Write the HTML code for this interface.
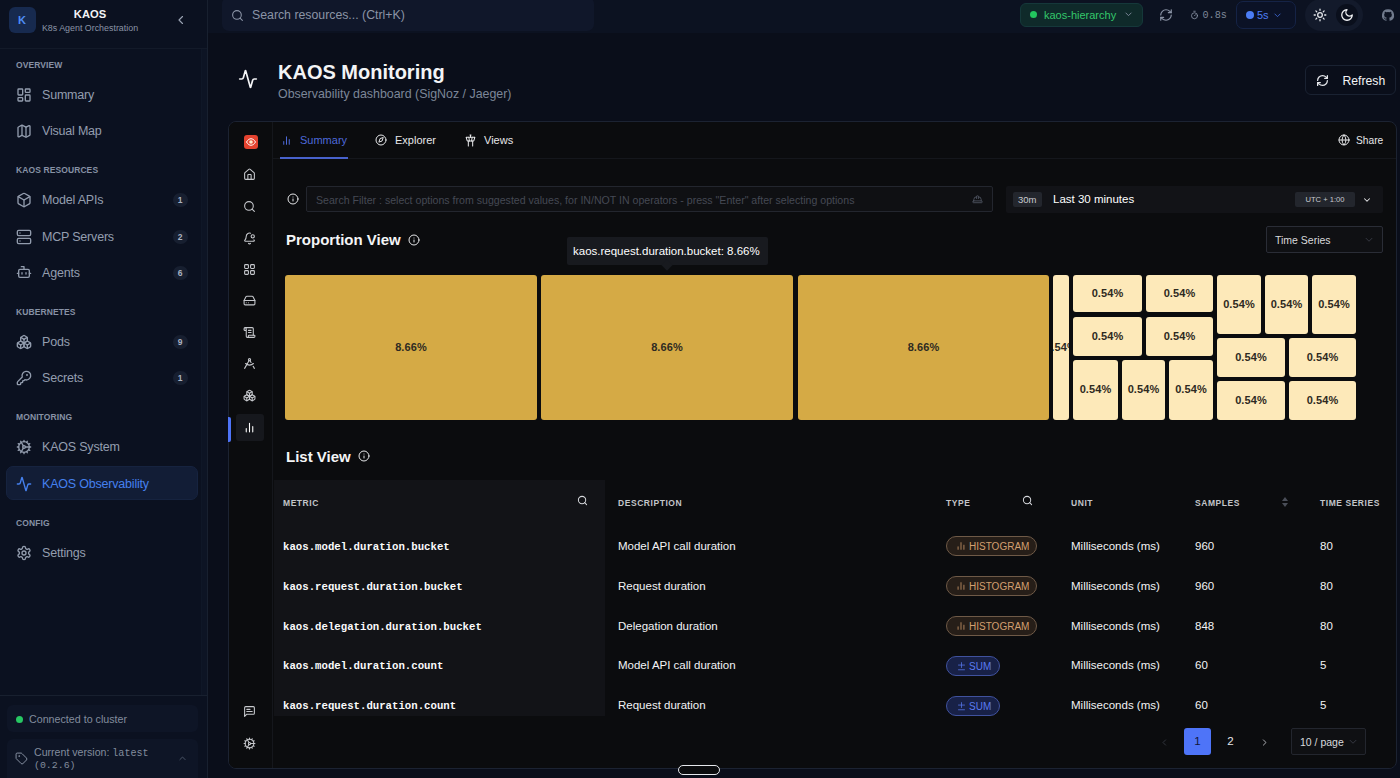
<!DOCTYPE html>
<html lang="en">
<head>
<meta charset="utf-8">
<title>KAOS Monitoring</title>
<style>
*{box-sizing:border-box;margin:0;padding:0}
html,body{width:1400px;height:778px;overflow:hidden;background:#0a0e1a;font-family:"Liberation Sans",sans-serif;color:#e5e7eb}
.abs{position:absolute}
svg{display:block;overflow:visible}
.ic{position:absolute;fill:none;stroke:currentColor;stroke-width:2;stroke-linecap:round;stroke-linejoin:round}
.t{position:absolute;white-space:nowrap;line-height:1}
.mono{font-family:"Liberation Mono",monospace}

/* ---------- sidebar ---------- */
#sb{position:absolute;left:0;top:0;width:208px;height:778px;background:#0b1120;border-right:1px solid #18202f}
#sb .hdrline{position:absolute;left:0;top:48px;width:207px;height:1px;background:#131a29}
#sb .ftline{position:absolute;left:0;top:695px;width:207px;height:1px;background:#18202f}
.sec{position:absolute;left:16px;font-size:8.5px;font-weight:bold;letter-spacing:.1px;color:#8792a5;line-height:1;white-space:nowrap}
.nav{position:absolute;left:42px;margin-top:.5px;font-size:12.5px;color:#949eaf;line-height:1;white-space:nowrap;letter-spacing:-.2px}
.nico{position:absolute;left:16px;width:16px;height:16px;color:#929cad;margin-top:1.5px}
.bdg{position:absolute;left:172.5px;margin-top:.5px;width:15px;height:14px;border-radius:7px;background:#171f30;color:#aab3c2;font-size:8.5px;font-weight:bold;text-align:center;line-height:14px}

/* ---------- topbar ---------- */
#top{position:absolute;left:208px;top:0;width:1192px;height:33px;background:#0c1221}

/* ---------- panel ---------- */
#pn{position:absolute;left:228px;top:121px;width:1169px;height:648px;background:#0b0c0e;border:1px solid #1c2332;border-radius:8px;overflow:hidden}
#pn .rail{position:absolute;left:0;top:0;width:44px;height:100%;border-right:1px solid #15171c;background:#0b0c0e}
.ri{position:absolute;left:14px;width:13px;height:13px;color:#c6c8cc;stroke-width:2}
.tab{position:absolute;top:13px;font-size:11px;color:#e6e7e9;line-height:1;white-space:nowrap}
.tm{position:absolute;padding-bottom:1.5px;border-radius:3px;font-size:11px;font-weight:bold;color:#2e2a22;display:flex;align-items:center;justify-content:center;overflow:hidden;white-space:nowrap;letter-spacing:.1px}
.tm.g{background:#d5aa45}
.tm.l{background:#fde9b9}
.th{position:absolute;top:377px;font-size:8.5px;font-weight:bold;letter-spacing:.55px;color:#c3c5c9;line-height:1;white-space:nowrap}
.td{position:absolute;font-size:11.5px;color:#f2f3f5;line-height:1;white-space:nowrap}
.mn{position:absolute;left:54px;font-family:"Liberation Mono",monospace;font-weight:bold;font-size:10.7px;color:#fbfbfc;line-height:1;white-space:nowrap;letter-spacing:0;margin-top:2px}
.hg{position:absolute;left:717px;width:91px;height:20px;border-radius:10px;border:1px solid #6f5a47;background:#261e18;color:#d39f6f;font-size:10px;line-height:19.5px;white-space:nowrap}
.sm{position:absolute;left:717px;width:54px;height:20px;border-radius:10px;border:1px solid #40529e;background:#182147;color:#5a7bf0;font-size:10px;line-height:19.5px;margin-top:1px;white-space:nowrap}
</style>
</head>
<body>

<!-- ================= SIDEBAR ================= -->
<div id="sb">
  <div class="abs" style="left:9px;top:7px;width:27px;height:26px;border-radius:6px;background:#172a4f"></div>
  <div class="t" style="left:18px;top:15px;font-size:11px;font-weight:bold;color:#4f8df7">K</div>
  <div class="t" style="left:40px;width:100px;text-align:center;top:9px;font-size:11.2px;font-weight:bold;color:#f3f4f6">KAOS</div>
  <div class="t" style="left:40px;width:100px;text-align:center;top:24px;font-size:8.9px;color:#8a94a6">K8s Agent Orchestration</div>
  <svg class="ic" style="left:175px;top:14px;color:#9aa3b3;stroke-width:2.3" width="12" height="12" viewBox="0 0 24 24"><path d="M15 5l-7 7 7 7"/></svg>
  <div class="abs" style="left:201px;top:49px;width:6px;height:646px;background:#0d1424;border-left:1px solid #0f1727"></div>
  <div class="hdrline"></div>

  <div class="sec" style="top:61px">OVERVIEW</div>
  <svg class="ic nico" style="top:85px" viewBox="0 0 24 24"><rect x="3" y="3" width="7" height="9" rx="1"/><rect x="14" y="3" width="7" height="5" rx="1"/><rect x="14" y="12" width="7" height="9" rx="1"/><rect x="3" y="16" width="7" height="5" rx="1"/></svg>
  <div class="nav" style="top:88px">Summary</div>
  <svg class="ic nico" style="top:121px" viewBox="0 0 24 24"><path d="M14.1 5.8a2 2 0 0 0 1.8 0l3.7-1.8A1 1 0 0 1 21 4.9v12.9a1 1 0 0 1-.6.9l-4.500 2.300a2 2 0 0 1-1.800 0l-4.200-2.100a2 2 0 0 0-1.800 0l-3.700 1.800A1 1 0 0 1 3 19.800V6.900a1 1 0 0 1 .6-.9l4.500-2.300a2 2 0 0 1 1.800 0z"/><path d="M15 5.800v15"/><path d="M9 3.200v15"/></svg>
  <div class="nav" style="top:124px">Visual Map</div>

  <div class="sec" style="top:166px">KAOS RESOURCES</div>
  <svg class="ic nico" style="top:190px" viewBox="0 0 24 24"><path d="M21 8a2 2 0 0 0-1-1.700l-7-4a2 2 0 0 0-2 0l-7 4A2 2 0 0 0 3 8v8a2 2 0 0 0 1 1.700l7 4a2 2 0 0 0 2 0l7-4A2 2 0 0 0 21 16z"/><path d="M3.300 7L12 12l8.700-5"/><path d="M12 22V12"/></svg>
  <div class="nav" style="top:193px">Model APIs</div><div class="bdg" style="top:192px">1</div>
  <svg class="ic nico" style="top:227px" viewBox="0 0 24 24"><rect x="2" y="2" width="20" height="8" rx="2"/><rect x="2" y="14" width="20" height="8" rx="2"/><path d="M6 6h.01M6 18h.01"/></svg>
  <div class="nav" style="top:230px">MCP Servers</div><div class="bdg" style="top:229px">2</div>
  <svg class="ic nico" style="top:262px" viewBox="0 0 24 24"><path d="M12 8V4H8"/><rect x="4" y="8" width="16" height="12" rx="2"/><path d="M2 14h2M20 14h2M15 13v2M9 13v2"/></svg>
  <div class="nav" style="top:266px">Agents</div><div class="bdg" style="top:265px">6</div>

  <div class="sec" style="top:308px">KUBERNETES</div>
  <svg class="ic nico" style="top:332px" viewBox="0 0 24 24"><path d="M2.970 12.920A2 2 0 0 0 2 14.630v3.240a2 2 0 0 0 .970 1.710l3 1.800a2 2 0 0 0 2.060 0L12 19v-5.500l-5-3-4.030 2.420Z"/><path d="M7 16.500l-4.740-2.850"/><path d="M7 16.500l5-3"/><path d="M7 16.500v5.170"/><path d="M12 13.500V19l3.970 2.380a2 2 0 0 0 2.060 0l3-1.800a2 2 0 0 0 .970-1.710v-3.240a2 2 0 0 0-.970-1.710L17 10.500l-5 3Z"/><path d="M17 16.500l-5-3"/><path d="M17 16.500l4.740-2.850"/><path d="M17 16.500v5.170"/><path d="M7.970 4.420A2 2 0 0 0 7 6.130v4.370l5 3 5-3V6.130a2 2 0 0 0-.970-1.710l-3-1.800a2 2 0 0 0-2.060 0l-3 1.800Z"/><path d="M12 8L7.260 5.150"/><path d="M12 8l4.740-2.850"/><path d="M12 13.500V8"/></svg>
  <div class="nav" style="top:335px">Pods</div><div class="bdg" style="top:334px">9</div>
  <svg class="ic nico" style="top:368px" viewBox="0 0 24 24"><path d="M2.586 17.414A2 2 0 0 0 2 18.828V21a1 1 0 0 0 1 1h3a1 1 0 0 0 1-1v-1a1 1 0 0 1 1-1h1a1 1 0 0 0 1-1v-1a1 1 0 0 1 1-1h.172a2 2 0 0 0 1.414-.586l.814-.814a6.500 6.500 0 1 0-4-4z"/><circle cx="16.500" cy="7.500" r=".5" fill="currentColor"/></svg>
  <div class="nav" style="top:371px">Secrets</div><div class="bdg" style="top:370px">1</div>

  <div class="sec" style="top:413px">MONITORING</div>
  <svg class="ic nico" style="top:437px" viewBox="0 0 24 24"><circle cx="12" cy="12" r="8"/><path d="M12 2v2M12 22v-2M17 20.660l-1-1.730M11 10.270L7 3.340M20.660 17l-1.730-1M3.340 7l1.730 1M14 12h8M2 12h2M20.660 7l-1.730 1M3.340 17l1.730-1M17 3.340l-1 1.730M11 13.730l-4 6.930"/><circle cx="12" cy="12" r="2"/></svg>
  <div class="nav" style="top:440px">KAOS System</div>
  <div class="abs" style="left:6px;top:466px;width:192px;height:34px;border-radius:7px;background:#121d36;border:1px solid #16233f"></div>
  <svg class="ic nico" style="top:474px;color:#4580ee" viewBox="0 0 24 24"><path d="M22 12h-2.480a2 2 0 0 0-1.930 1.460l-2.350 8.360a.25.25 0 0 1-.480 0L9.240 2.180a.25.25 0 0 0-.480 0l-2.350 8.360A2 2 0 0 1 4.490 12H2"/></svg>
  <div class="nav" style="top:477px;color:#4580ee">KAOS Observability</div>

  <div class="sec" style="top:519px">CONFIG</div>
  <svg class="ic nico" style="top:543px" viewBox="0 0 24 24"><path d="M12.220 2h-.440a2 2 0 0 0-2 2v.180a2 2 0 0 1-1 1.730l-.430.250a2 2 0 0 1-2 0l-.150-.080a2 2 0 0 0-2.730.730l-.220.380a2 2 0 0 0 .730 2.730l.150.100a2 2 0 0 1 1 1.720v.510a2 2 0 0 1-1 1.740l-.150.090a2 2 0 0 0-.730 2.730l.220.380a2 2 0 0 0 2.730.730l.150-.080a2 2 0 0 1 2 0l.430.250a2 2 0 0 1 1 1.730V20a2 2 0 0 0 2 2h.440a2 2 0 0 0 2-2v-.180a2 2 0 0 1 1-1.730l.430-.250a2 2 0 0 1 2 0l.150.080a2 2 0 0 0 2.730-.730l.220-.390a2 2 0 0 0-.730-2.730l-.150-.080a2 2 0 0 1-1-1.740v-.500a2 2 0 0 1 1-1.740l.150-.090a2 2 0 0 0 .730-2.730l-.220-.380a2 2 0 0 0-2.730-.730l-.150.080a2 2 0 0 1-2 0l-.430-.250a2 2 0 0 1-1-1.730V4a2 2 0 0 0-2-2z"/><circle cx="12" cy="12" r="3"/></svg>
  <div class="nav" style="top:546px">Settings</div>

  <div class="ftline"></div>
  <div class="abs" style="left:7px;top:705px;width:191px;height:27px;border-radius:6px;background:#0e1526"></div>
  <div class="abs" style="left:16px;top:715.5px;width:7px;height:7px;border-radius:4px;background:#27c763"></div>
  <div class="t" style="left:29px;top:714px;font-size:10.7px;color:#828c9d">Connected to cluster</div>
  <div class="abs" style="left:7px;top:739px;width:191px;height:45px;border-radius:6px;background:#0e1526"></div>
  <svg class="ic" style="left:15px;top:752px;color:#8a94a6;stroke-width:1.800" width="13" height="13" viewBox="0 0 24 24"><path d="M12.586 2.586A2 2 0 0 0 11.172 2H4a2 2 0 0 0-2 2v7.172a2 2 0 0 0 .586 1.414l8.704 8.704a2.426 2.426 0 0 0 3.420 0l6.580-6.580a2.426 2.426 0 0 0 0-3.420z"/><circle cx="7.500" cy="7.500" r=".5" fill="currentColor"/></svg>
  <div class="t" style="left:34px;top:747px;font-size:10.6px;color:#828c9d">Current version: <span class="mono" style="font-size:10.1px">latest</span></div>
  <div class="t mono" style="left:34px;top:760.5px;font-size:9.9px;color:#828c9d">(0.2.6)</div>
  <svg class="ic" style="left:178px;top:754px;color:#4b5568;stroke-width:2.6" width="9" height="9" viewBox="0 0 24 24"><path d="M5 15l7-7 7 7"/></svg>
</div>

<!-- ================= TOP BAR ================= -->
<div id="top">
  <!-- coordinates inside #top are page-x minus 208 -->
  <div class="abs" style="left:14px;top:-3px;width:372px;height:34px;border-radius:7px;background:#10172a"></div>
  <svg class="ic" style="left:23px;top:9px;color:#8b94a6;stroke-width:2" width="13" height="13" viewBox="0 0 24 24"><circle cx="11" cy="11" r="8"/><path d="M21 21l-4.300-4.300"/></svg>
  <div class="t" style="left:44px;top:9px;font-size:12.3px;color:#8b94a6">Search resources... (Ctrl+K)</div>

  <div class="abs" style="left:812px;top:3px;width:123px;height:24px;border-radius:6px;background:#0f2a2a;border:1px solid #15383a"></div>
  <div class="abs" style="left:822px;top:11px;width:7px;height:7px;border-radius:4px;background:#22c55e"></div>
  <div class="t" style="left:836px;top:10px;font-size:11px;color:#34c76a">kaos-hierarchy</div>
  <svg class="ic" style="left:916px;top:10px;color:#8b94a6;stroke-width:2.200" width="9" height="9" viewBox="0 0 24 24"><path d="M5 8l7 7 7-7"/></svg>

  <svg class="ic" style="left:951px;top:8px;color:#8b94a6;stroke-width:2" width="14" height="14" viewBox="0 0 24 24"><path d="M3 12a9 9 0 0 1 9-9 9.750 9.750 0 0 1 6.740 2.740L21 8"/><path d="M21 3v5h-5"/><path d="M21 12a9 9 0 0 1-9 9 9.750 9.750 0 0 1-6.740-2.740L3 16"/><path d="M8 16H3v5"/></svg>

  <svg class="ic" style="left:982px;top:10px;color:#8b94a6;stroke-width:2.200" width="9" height="10" viewBox="0 0 24 24"><path d="M10 2h4"/><path d="M12 14l3-3"/><circle cx="12" cy="14" r="8"/></svg>
  <div class="t mono" style="left:994.5px;top:10.5px;font-size:10.2px;color:#7d8798">0.8s</div>

  <div class="abs" style="left:1028px;top:1px;width:60px;height:28px;border-radius:7px;background:#0b1226;border:1px solid #152346"></div>
  <div class="abs" style="left:1038px;top:11px;width:8px;height:8px;border-radius:4px;background:#4b7df5"></div>
  <div class="t" style="left:1049px;top:10px;font-size:11px;color:#4b7df5">5s</div>
  <svg class="ic" style="left:1065px;top:11px;color:#3f6ad8;stroke-width:2.200" width="9" height="9" viewBox="0 0 24 24"><path d="M5 8l7 7 7-7"/></svg>

  <div class="abs" style="left:1097px;top:-1px;width:58px;height:32px;border-radius:16px;background:#131a2b"></div>
  <div class="abs" style="left:1128px;top:4px;width:22px;height:22px;border-radius:11px;background:#0a0f1c"></div>
  <svg class="ic" style="left:1105px;top:8px;color:#e5e7eb;stroke-width:2.200" width="14" height="14" viewBox="0 0 24 24"><circle cx="12" cy="12" r="4"/><path d="M12 2v2M12 20v2M4.930 4.930l1.410 1.410M17.660 17.660l1.410 1.410M2 12h2M20 12h2M6.340 17.660l-1.410 1.410M19.070 4.930l-1.410 1.410"/></svg>
  <svg class="ic" style="left:1132px;top:8px;color:#f3f4f6;stroke-width:2.200" width="14" height="14" viewBox="0 0 24 24"><path d="M12 3a6 6 0 0 0 9 9 9 9 0 1 1-9-9Z"/></svg>

  <svg class="abs" style="left:1173.5px;top:9px" width="12" height="12" viewBox="0 0 24 24" fill="#717b8d"><path d="M12 .3a12 12 0 0 0-3.800 23.400c.600.100.800-.300.800-.600v-2c-3.300.700-4-1.600-4-1.600-.600-1.400-1.400-1.800-1.400-1.800-1-.700.100-.700.100-.700 1.200.100 1.800 1.200 1.800 1.200 1 1.800 2.800 1.300 3.500 1 .100-.800.400-1.300.800-1.600-2.700-.300-5.500-1.300-5.500-6 0-1.200.500-2.300 1.300-3.100-.200-.400-.600-1.600.100-3.200 0 0 1-.300 3.300 1.200a11.500 11.500 0 0 1 6 0c2.300-1.500 3.300-1.200 3.300-1.200.700 1.600.200 2.900.100 3.200.800.800 1.300 1.900 1.300 3.200 0 4.600-2.800 5.600-5.500 5.900.500.400.900 1 .900 2.200v3.300c0 .300.100.700.800.600A12 12 0 0 0 12 .300"/></svg>
</div>

<!-- ================= PAGE HEADER ================= -->
<svg class="ic" style="left:238px;top:69px;color:#f3f4f6;stroke-width:2" width="20" height="20" viewBox="0 0 24 24"><path d="M22 12h-2.480a2 2 0 0 0-1.930 1.460l-2.350 8.360a.25.25 0 0 1-.480 0L9.240 2.180a.25.25 0 0 0-.480 0l-2.350 8.360A2 2 0 0 1 4.490 12H2"/></svg>
<div class="t" style="left:278px;top:62px;font-size:20px;font-weight:bold;color:#f3f4f6">KAOS Monitoring</div>
<div class="t" style="left:278px;top:88px;font-size:12.4px;color:#7c8698">Observability dashboard (SigNoz / Jaeger)</div>
<div class="abs" style="left:1305px;top:65px;width:91px;height:30px;border-radius:6px;border:1px solid #1a2232;background:#0a0e1a"></div>
<svg class="ic" style="left:1316px;top:73.5px;color:#e5e7eb;stroke-width:2.3" width="13" height="13" viewBox="0 0 24 24"><path d="M3 12a9 9 0 0 1 9-9 9.750 9.750 0 0 1 6.740 2.740L21 8"/><path d="M21 3v5h-5"/><path d="M21 12a9 9 0 0 1-9 9 9.750 9.750 0 0 1-6.740-2.740L3 16"/><path d="M8 16H3v5"/></svg>
<div class="t" style="left:1342.5px;top:74.5px;font-size:12.2px;color:#f3f4f6">Refresh</div>


<!-- ================= SIGNOZ PANEL (coords = page minus 229,122) ================= -->
<div id="pn">
  <div class="rail">
    <div class="abs" style="left:14.5px;top:13px;width:14px;height:14px;border-radius:3px;background:#e5432f"></div>
    <svg class="abs" style="left:16.5px;top:16px" width="10" height="8" viewBox="0 0 20 16"><path d="M1 8C4 3 7 1.500 10 1.500S16 3 19 8c-3 5-6 6.500-9 6.500S4 13 1 8Z" fill="none" stroke="#fff" stroke-width="2"/><circle cx="10" cy="8" r="3.600" fill="#ffe9c9"/></svg>
    <svg class="ic ri" style="top:46px" viewBox="0 0 24 24"><path d="M15 21v-8a1 1 0 0 0-1-1h-4a1 1 0 0 0-1 1v8"/><path d="M3 10a2 2 0 0 1 .709-1.528l7-6a2 2 0 0 1 2.582 0l7 6A2 2 0 0 1 21 10v9a2 2 0 0 1-2 2H5a2 2 0 0 1-2-2z"/></svg>
    <svg class="ic ri" style="top:78px" viewBox="0 0 24 24"><circle cx="11" cy="11" r="8"/><path d="M21 21l-4.300-4.300"/></svg>
    <svg class="ic ri" style="top:110px" viewBox="0 0 24 24"><path d="M10.268 21a2 2 0 0 0 3.464 0"/><path d="M13.916 2.314A6 6 0 0 0 6 8c0 4.499-1.411 5.956-2.740 7.327A1 1 0 0 0 4 17h16a1 1 0 0 0 .740-1.673 9 9 0 0 1-.585-.665"/><circle cx="18" cy="8" r="3"/></svg>
    <svg class="ic ri" style="top:141px" viewBox="0 0 24 24"><rect x="3" y="3" width="7" height="7" rx="1.500"/><rect x="14" y="3" width="7" height="7" rx="1.500"/><rect x="14" y="14" width="7" height="7" rx="1.500"/><rect x="3" y="14" width="7" height="7" rx="1.500"/></svg>
    <svg class="ic ri" style="top:172px" viewBox="0 0 24 24"><path d="M22 12H2"/><path d="M5.450 5.110L2 12v6a2 2 0 0 0 2 2h16a2 2 0 0 0 2-2v-6l-3.450-6.890A2 2 0 0 0 16.760 4H7.240a2 2 0 0 0-1.790 1.110z"/><path d="M6 16h.01M10 16h.01"/></svg>
    <svg class="ic ri" style="top:204px" viewBox="0 0 24 24"><path d="M15 12h-5M15 8h-5"/><path d="M19 17V5a2 2 0 0 0-2-2H4"/><path d="M8 21h12a2 2 0 0 0 2-2v-1a1 1 0 0 0-1-1H11a1 1 0 0 0-1 1v1a2 2 0 1 1-4 0V5a2 2 0 1 0-4 0v2a1 1 0 0 0 1 1h3"/></svg>
    <svg class="ic ri" style="top:235px" viewBox="0 0 24 24"><path d="M12.990 6.740l1.930 3.440"/><path d="M19.136 12a10 10 0 0 1-14.271 0"/><path d="M21 21l-2.160-3.840"/><path d="M3 21l8.020-14.260"/><circle cx="12" cy="5" r="2"/></svg>
    <svg class="ic ri" style="top:267px" viewBox="0 0 24 24"><path d="M2.970 12.920A2 2 0 0 0 2 14.630v3.240a2 2 0 0 0 .970 1.710l3 1.800a2 2 0 0 0 2.060 0L12 19v-5.500l-5-3-4.030 2.420Z"/><path d="M7 16.500l-4.740-2.850M7 16.500l5-3M7 16.500v5.170"/><path d="M12 13.500V19l3.970 2.380a2 2 0 0 0 2.060 0l3-1.800a2 2 0 0 0 .970-1.710v-3.240a2 2 0 0 0-.970-1.710L17 10.500l-5 3Z"/><path d="M17 16.500l-5-3M17 16.500l4.740-2.850M17 16.500v5.170"/><path d="M7.970 4.420A2 2 0 0 0 7 6.130v4.370l5 3 5-3V6.130a2 2 0 0 0-.970-1.710l-3-1.800a2 2 0 0 0-2.060 0l-3 1.800Z"/><path d="M12 8L7.260 5.150M12 8l4.740-2.850M12 13.500V8"/></svg>
    <div class="abs" style="left:7px;top:292px;width:28px;height:27px;border-radius:3px;background:#16181d"></div>
    <svg class="ic ri" style="top:299px;color:#fff" viewBox="0 0 24 24"><path d="M18 20V10M12 20V4M6 20v-6"/></svg>
    <svg class="ic ri" style="top:583px" viewBox="0 0 24 24"><path d="M21 15a2 2 0 0 1-2 2H7l-4 4V5a2 2 0 0 1 2-2h14a2 2 0 0 1 2 2z"/><path d="M13 8H7M17 12H7"/></svg>
    <svg class="ic ri" style="top:615px" viewBox="0 0 24 24"><circle cx="12" cy="12" r="8"/><path d="M12 2v2M12 22v-2M17 20.660l-1-1.730M11 10.270L7 3.340M20.660 17l-1.730-1M3.340 7l1.730 1M14 12h8M2 12h2M20.660 7l-1.730 1M3.340 17l1.730-1M17 3.340l-1 1.730M11 13.730l-4 6.930"/><circle cx="12" cy="12" r="2"/></svg>
  </div>

  <!-- tabs -->
  <div class="abs" style="left:44px;top:36px;width:1124px;height:1px;background:#15171c"></div>
  <svg class="ic" style="left:52px;top:13px;color:#4d69da;stroke-width:2.200" width="11" height="11" viewBox="0 0 24 24"><path d="M18 20V10M12 20V4M6 20v-6"/></svg>
  <div class="tab" style="left:71px;color:#4d69da">Summary</div>
  <div class="abs" style="left:51px;top:35px;width:68px;height:2px;background:#4862cc"></div>
  <svg class="ic" style="left:146px;top:12px;color:#e6e7e9;stroke-width:2" width="12" height="12" viewBox="0 0 24 24"><circle cx="12" cy="12" r="10"/><path d="M16.240 7.760l-2.120 6.360-6.360 2.120 2.120-6.360z"/></svg>
  <div class="tab" style="left:166px">Explorer</div>
  <svg class="ic" style="left:234.5px;top:11.5px;color:#e6e7e9;stroke-width:1.9" width="13" height="13" viewBox="0 0 24 24"><path d="M18.200 12.270L20 6H4l1.800 6.270a1 1 0 0 0 .950.730h10.500a1 1 0 0 0 .960-.730Z"/><path d="M8 13v9M16 22v-9M9 6l1 7M15 6l-1 7M12 6V2M13 2h-2"/></svg>
  <div class="tab" style="left:255px">Views</div>
  <svg class="ic" style="left:1109px;top:12px;color:#e6e7e9;stroke-width:2" width="12" height="12" viewBox="0 0 24 24"><circle cx="12" cy="12" r="10"/><path d="M12 2a14.500 14.500 0 0 0 0 20 14.500 14.500 0 0 0 0-20M2 12h20"/></svg>
  <div class="tab" style="left:1127px;font-size:10.2px;top:13.5px">Share</div>

  <!-- filter row -->
  <svg class="ic" style="left:58px;top:71px;color:#e6e7e9;stroke-width:2" width="12" height="12" viewBox="0 0 24 24"><circle cx="12" cy="12" r="10"/><path d="M12 16v-4M12 8h.01"/></svg>
  <div class="abs" style="left:77px;top:64px;width:687px;height:26px;border:1px solid #23262e;border-radius:2px;background:#0f1013"></div>
  <div class="t" style="left:87px;top:72.5px;font-size:10.6px;color:#454954;letter-spacing:0">Search Filter : select options from suggested values, for IN/NOT IN operators - press "Enter" after selecting options</div>
  <svg class="ic" style="left:743px;top:72px;color:#4d525e;stroke-width:2" width="11" height="11" viewBox="0 0 24 24"><path d="M10 10V5a1 1 0 0 1 1-1h2a1 1 0 0 1 1 1v5"/><path d="M14 6a6 6 0 0 1 6 6v3M4 15v-3a6 6 0 0 1 6-6"/><rect x="2" y="15" width="20" height="4" rx="1"/></svg>
  <div class="abs" style="left:777px;top:64px;width:377px;height:27px;border-radius:2px;background:#121317"></div>
  <div class="abs" style="left:784px;top:70px;width:29px;height:15px;border-radius:2px;background:#23262d"></div>
  <div class="t" style="left:789px;top:73px;font-size:9.5px;color:#c9cbd0">30m</div>
  <div class="t" style="left:824px;top:72px;font-size:11.5px;color:#ffffff">Last 30 minutes</div>
  <div class="abs" style="left:1066px;top:70px;width:60px;height:15px;border-radius:2px;background:#23262d"></div>
  <div class="t" style="left:1076.5px;top:74px;font-size:7.6px;color:#c9cbd0">UTC + 1:00</div>
  <svg class="ic" style="left:1133px;top:73px;color:#e6e7e9;stroke-width:2.500" width="10" height="10" viewBox="0 0 24 24"><path d="M6 9l6 6 6-6"/></svg>

  <!-- proportion view -->
  <div class="t" style="left:57px;top:110px;font-size:15px;font-weight:bold;color:#f4f5f6;letter-spacing:0">Proportion View</div>
  <svg class="ic" style="left:179px;top:112px;color:#e6e7e9;stroke-width:2" width="12" height="12" viewBox="0 0 24 24"><circle cx="12" cy="12" r="10"/><path d="M12 16v-4M12 8h.01"/></svg>
  <div class="abs" style="left:1037px;top:104px;width:117px;height:27px;border:1px solid #2a2d36;border-radius:2px;background:#0f1013"></div>
  <div class="t" style="left:1046px;top:113px;font-size:10.5px;color:#d9dadd">Time Series</div>
  <svg class="ic" style="left:1135px;top:113px;color:#3c404a;stroke-width:2" width="10" height="10" viewBox="0 0 24 24"><path d="M5 8l7 7 7-7"/></svg>

  <!-- treemap -->
  <div class="tm g" style="left:56px;top:153px;width:252px;height:145px">8.66%</div>
  <div class="tm g" style="left:312px;top:153px;width:252px;height:145px">8.66%</div>
  <div class="tm g" style="left:569px;top:153px;width:251px;height:145px">8.66%</div>
  <div class="tm l" style="left:824px;top:153px;width:16px;height:145px">0.54%</div>
  <div class="tm l" style="left:844px;top:153px;width:69px;height:37px">0.54%</div>
  <div class="tm l" style="left:917px;top:153px;width:67px;height:37px">0.54%</div>
  <div class="tm l" style="left:844px;top:195px;width:69px;height:39px">0.54%</div>
  <div class="tm l" style="left:917px;top:195px;width:67px;height:39px">0.54%</div>
  <div class="tm l" style="left:844px;top:238px;width:45px;height:60px">0.54%</div>
  <div class="tm l" style="left:893px;top:238px;width:43px;height:60px">0.54%</div>
  <div class="tm l" style="left:940px;top:238px;width:44px;height:60px">0.54%</div>
  <div class="tm l" style="left:988px;top:153px;width:44px;height:59px">0.54%</div>
  <div class="tm l" style="left:1036px;top:153px;width:43px;height:59px">0.54%</div>
  <div class="tm l" style="left:1083px;top:153px;width:44px;height:59px">0.54%</div>
  <div class="tm l" style="left:988px;top:216px;width:68px;height:39px">0.54%</div>
  <div class="tm l" style="left:1060px;top:216px;width:67px;height:39px">0.54%</div>
  <div class="tm l" style="left:988px;top:259px;width:68px;height:39px">0.54%</div>
  <div class="tm l" style="left:1060px;top:259px;width:67px;height:39px">0.54%</div>

  <!-- tooltip -->
  <div class="abs" style="left:338px;top:115px;width:201px;height:28px;border-radius:2px;background:#181a1f"></div>
  <div class="abs" style="left:434px;top:139px;width:8px;height:8px;background:#181a1f;transform:rotate(45deg)"></div>
  <div class="t" style="left:344px;top:124px;font-size:11.5px;color:#ffffff">kaos.request.duration.bucket: 8.66%</div>
  <!-- list view -->
  <div class="t" style="left:57px;top:326.5px;font-size:15px;font-weight:bold;color:#f4f5f6;letter-spacing:0">List View</div>
  <svg class="ic" style="left:129px;top:328px;color:#e6e7e9;stroke-width:2" width="12" height="12" viewBox="0 0 24 24"><circle cx="12" cy="12" r="10"/><path d="M12 16v-4M12 8h.01"/></svg>
  <div class="abs" style="left:45px;top:358px;width:331px;height:236px;background:#121317"></div>
  <div class="th" style="left:54px">METRIC</div>
  <svg class="ic" style="left:348px;top:373px;color:#d6d8dc;stroke-width:2.200" width="11" height="11" viewBox="0 0 24 24"><circle cx="11" cy="11" r="8"/><path d="M21 21l-4.300-4.300"/></svg>
  <div class="th" style="left:389px">DESCRIPTION</div>
  <div class="th" style="left:717px">TYPE</div>
  <svg class="ic" style="left:793px;top:373px;color:#d6d8dc;stroke-width:2.200" width="11" height="11" viewBox="0 0 24 24"><circle cx="11" cy="11" r="8"/><path d="M21 21l-4.300-4.300"/></svg>
  <div class="th" style="left:842px">UNIT</div>
  <div class="th" style="left:966px">SAMPLES</div>
  <svg class="abs" style="left:1053px;top:375px" width="6" height="10" viewBox="0 0 6 10"><path d="M3 0L6 4H0Z" fill="#4a4e58"/><path d="M3 10L6 6H0Z" fill="#4a4e58"/></svg>
  <div class="th" style="left:1091px">TIME SERIES</div>
  <div class="mn" style="top:418px">kaos.model.duration.bucket</div>
  <div class="td" style="left:389px;top:419px">Model API call duration</div>
  <div class="hg" style="top:414px"><svg class="ic" style="left:9px;top:4px;stroke-width:2.2;opacity:.85" width="10" height="10" viewBox="0 0 24 24"><path d="M19 20V10M12 20V4M5 20v-6"/></svg><span style="position:absolute;left:22px">HISTOGRAM</span></div>
  <div class="td" style="left:842px;top:419px">Milliseconds (ms)</div>
  <div class="td" style="left:966px;top:419px">960</div>
  <div class="td" style="left:1091px;top:419px">80</div>
  <div class="mn" style="top:458px">kaos.request.duration.bucket</div>
  <div class="td" style="left:389px;top:459px">Request duration</div>
  <div class="hg" style="top:454px"><svg class="ic" style="left:9px;top:4px;stroke-width:2.2;opacity:.85" width="10" height="10" viewBox="0 0 24 24"><path d="M19 20V10M12 20V4M5 20v-6"/></svg><span style="position:absolute;left:22px">HISTOGRAM</span></div>
  <div class="td" style="left:842px;top:459px">Milliseconds (ms)</div>
  <div class="td" style="left:966px;top:459px">960</div>
  <div class="td" style="left:1091px;top:459px">80</div>
  <div class="mn" style="top:498px">kaos.delegation.duration.bucket</div>
  <div class="td" style="left:389px;top:499px">Delegation duration</div>
  <div class="hg" style="top:494px"><svg class="ic" style="left:9px;top:4px;stroke-width:2.2;opacity:.85" width="10" height="10" viewBox="0 0 24 24"><path d="M19 20V10M12 20V4M5 20v-6"/></svg><span style="position:absolute;left:22px">HISTOGRAM</span></div>
  <div class="td" style="left:842px;top:499px">Milliseconds (ms)</div>
  <div class="td" style="left:966px;top:499px">848</div>
  <div class="td" style="left:1091px;top:499px">80</div>
  <div class="mn" style="top:537px">kaos.model.duration.count</div>
  <div class="td" style="left:389px;top:538px">Model API call duration</div>
  <div class="sm" style="top:533px"><svg class="ic" style="left:10px;top:4px;stroke-width:2.2;opacity:.9" width="9" height="10" viewBox="0 0 24 24"><path d="M12 3v13M4 9.500h16M4 22h16"/></svg><span style="position:absolute;left:22px">SUM</span></div>
  <div class="td" style="left:842px;top:538px">Milliseconds (ms)</div>
  <div class="td" style="left:966px;top:538px">60</div>
  <div class="td" style="left:1091px;top:538px">5</div>
  <div class="mn" style="top:577px">kaos.request.duration.count</div>
  <div class="td" style="left:389px;top:578px">Request duration</div>
  <div class="sm" style="top:573px"><svg class="ic" style="left:10px;top:4px;stroke-width:2.2;opacity:.9" width="9" height="10" viewBox="0 0 24 24"><path d="M12 3v13M4 9.500h16M4 22h16"/></svg><span style="position:absolute;left:22px">SUM</span></div>
  <div class="td" style="left:842px;top:578px">Milliseconds (ms)</div>
  <div class="td" style="left:966px;top:578px">60</div>
  <div class="td" style="left:1091px;top:578px">5</div>
  <!-- clip + pagination -->
  <div class="abs" style="left:44px;top:594px;width:1122px;height:60px;background:#0b0c0e"></div>
  <svg class="ic" style="left:931px;top:616px;color:#3a3e48;stroke-width:2.200" width="9" height="9" viewBox="0 0 24 24"><path d="M15 5l-7 7 7 7"/></svg>
  <div class="abs" style="left:955px;top:606px;width:27px;height:27px;border-radius:3px;background:#4e74f8"></div>
  <div class="t" style="left:955px;width:27px;text-align:center;top:614px;font-size:11.5px;color:#10163a">1</div>
  <div class="t" style="left:988px;width:27px;text-align:center;top:614px;font-size:11.5px;color:#e6e7e9">2</div>
  <svg class="ic" style="left:1031px;top:616px;color:#c9cbd0;stroke-width:2.200" width="9" height="9" viewBox="0 0 24 24"><path d="M9 5l7 7-7 7"/></svg>
  <div class="abs" style="left:1062px;top:606px;width:75px;height:27px;border:1px solid #23262e;border-radius:2px;background:#0f1013"></div>
  <div class="t" style="left:1071px;top:615px;font-size:10.5px;color:#d9dadd">10 / page</div>
  <svg class="ic" style="left:1119px;top:615px;color:#3c404a;stroke-width:2" width="10" height="10" viewBox="0 0 24 24"><path d="M5 8l7 7 7-7"/></svg>

</div>

<div class="abs" style="left:228px;top:417px;width:3px;height:25px;border-radius:0 2px 2px 0;background:#4e74f8"></div>
<!-- bottom drag handle -->
<div class="abs" style="left:678px;top:765px;width:42px;height:10px;border-radius:5px;border:1px solid #e5e7eb;background:#0b0c0e"></div>

</body>
</html>
